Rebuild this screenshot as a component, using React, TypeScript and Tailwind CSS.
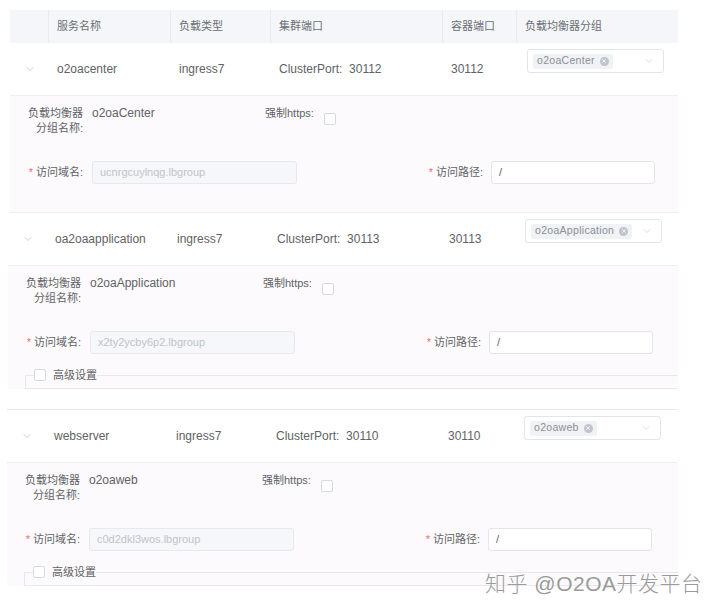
import { ChevronDown, X } from "lucide-react";

const services = [
  {
    name: "o2oacenter",
    port: "30112",
    group: "o2oaCenter",
    domain: "ucnrgcuylnqg.lbgroup",
    advanced: false,
    box: "ml-[10px] w-[668px]",
  },
  {
    name: "oa2oaapplication",
    port: "30113",
    group: "o2oaApplication",
    domain: "x2ty2ycby6p2.lbgroup",
    advanced: true,
    box: "ml-[8px] w-[670px]",
  },
  {
    name: "webserver",
    port: "30110",
    group: "o2oaweb",
    domain: "c0d2dkl3wos.lbgroup",
    advanced: true,
    box: "ml-[7px] w-[671px] mt-[20px] border-t border-[#e6e8ee]",
  },
];

const Checkbox = () => (
  <span className="inline-block w-[12px] h-[12px] rounded-[2px] border border-[#d6d9e0] bg-white" />
);

const GroupSelect = ({ group }: any) => (
  <div className="ml-[10px] mt-[6px] w-[137px] h-[24px] border border-[#e2e5ea] rounded-[3px] bg-white flex items-center px-[5px]">
    <span className="flex items-center gap-x-[5px] h-[15px] px-[4px] rounded-[2px] bg-[#f0f2f5] text-[10.5px] text-[#8c8f96] tracking-[0.3px]">
      {group}
      <span className="w-[9px] h-[9px] rounded-full bg-[#c0c4cc] flex items-center justify-center">
        <X size={6} strokeWidth={3} color="white" />
      </span>
    </span>
    <ChevronDown size={12} strokeWidth={1} color="#b8bcc4" className="ml-auto mr-[3px]" />
  </div>
);

const ServiceBlock = ({ s }: any) => {
  return (
    <div className={s.box}>
      <div className="h-[53px] flex bg-white border-b border-[#eceef3] text-[12px] text-[#606266]">
        <div className="w-[39px] flex items-center justify-center">
          <ChevronDown size={12} strokeWidth={1.1} color="#a3a8b0" />
        </div>
        <div className="w-[122px] flex items-center pl-2">{s.name}</div>
        <div className="w-[100px] flex items-center pl-2">ingress7</div>
        <div className="w-[172px] flex items-center pl-2">
          ClusterPort:&nbsp;&nbsp;{s.port}
        </div>
        <div className="w-[74px] flex items-center pl-2">{s.port}</div>
        <div className="flex-1 flex items-start">
          <GroupSelect group={s.group} />
        </div>
      </div>

      <div
        className={`bg-[#fcfafc] ${s.advanced ? "" : "border-b border-[#eceef3] pb-[28px]"}`}
      >
        <div className="flex pl-[18px] pt-[10px] text-[#606266]">
          <div className="w-[55px] text-right text-[11px] leading-[15px]">
            <p>负载均衡器</p>
            <p>分组名称:</p>
          </div>
          <div className="ml-[9px] w-[173px] text-[12px] leading-[15px]">{s.group}</div>
          <span className="text-[11px] leading-[15px]">强制https:</span>
          <span className="ml-[10px] mt-[2px]">
            <Checkbox />
          </span>
        </div>

        <div className="flex items-center pl-[18px] mt-[25px] text-[11px] text-[#606266]">
          <div className="w-[55px] text-right whitespace-nowrap">
            <span className="text-[#f56c6c] mr-[3px]">*</span>访问域名:
          </div>
          <div className="ml-[9px] w-[205px] h-[23px] rounded-[3px] border border-[#e6e9ef] bg-[#f5f7fa] flex items-center px-[7px] text-[#c0c4cc]">
            {s.domain}
          </div>
          <div className="w-[194px] text-right pr-[8px] whitespace-nowrap">
            <span className="text-[#f56c6c] mr-[3px]">*</span>访问路径:
          </div>
          <div className="w-[164px] h-[23px] rounded-[3px] border border-[#e2e5ea] bg-white flex items-center px-[7px] text-[#606266]">
            /
          </div>
        </div>

        {s.advanced && (
          <fieldset className="ml-[17px] mt-[13px] h-[22px] border-t border-l border-b border-[#e6e8ee]">
            <legend className="ml-[8px] flex items-center gap-x-[7px] text-[11px] text-[#606266]">
              <Checkbox />
              <span>高级设置</span>
            </legend>
          </fieldset>
        )}
      </div>
    </div>
  );
};

export default function App() {
  return (
    <div
      className="relative w-[720px] h-[614px] bg-white overflow-hidden"
      style={{ fontFamily: '"Liberation Sans", "Noto Sans CJK SC", sans-serif' }}
    >
      <div className="ml-[10px] mt-[10px] w-[668px] h-[33px] flex bg-[#f4f6f9] text-[11px] text-[#6b6e75]">
        <div className="w-[39px] border-r border-[#e8ebf0]" />
        <div className="w-[122px] flex items-center pl-2 border-r border-[#e8ebf0]">服务名称</div>
        <div className="w-[100px] flex items-center pl-2 border-r border-[#e8ebf0]">负载类型</div>
        <div className="w-[172px] flex items-center pl-2 border-r border-[#e8ebf0]">集群端口</div>
        <div className="w-[74px] flex items-center pl-2 border-r border-[#e8ebf0]">容器端口</div>
        <div className="flex-1 flex items-center pl-2">负载均衡器分组</div>
      </div>

      {services.map((s) => (
        <ServiceBlock key={s.name} s={s} />
      ))}

      <div className="absolute left-[485px] top-[568px] text-[21px] font-light text-[#9a9a9a] tracking-[0.5px] [text-shadow:0_0_2px_white]">
        知乎 @O2OA开发平台
      </div>
    </div>
  );
}
